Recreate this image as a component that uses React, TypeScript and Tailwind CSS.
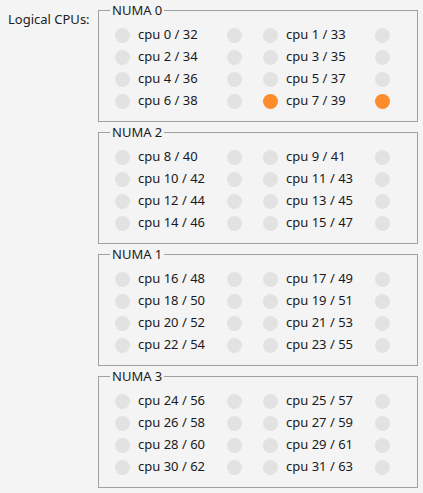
const numaNodes = [
  { name: 'NUMA 0', cpus: [0, 1, 2, 3, 4, 5, 6, 7] },
  { name: 'NUMA 2', cpus: [8, 9, 10, 11, 12, 13, 14, 15] },
  { name: 'NUMA 1', cpus: [16, 17, 18, 19, 20, 21, 22, 23] },
  { name: 'NUMA 3', cpus: [24, 25, 26, 27, 28, 29, 30, 31] },
];

// cpus currently busy (shown with orange dots)
const active = new Set([7]);

function Dot({ on }: { on: boolean }) {
  return (
    <span
      className={
        'block w-[15px] h-[15px] rounded-full shrink-0 ' +
        (on ? 'bg-[#fd8c2c]' : 'bg-[#e2e2e2]')
      }
    />
  );
}

function CpuItem({ cpu }: { cpu: number }) {
  const on = active.has(cpu);
  return (
    <div className="flex items-center h-[22px]">
      <Dot on={on} />
      <span className="ml-[8px] w-[89px] whitespace-nowrap">
        cpu {cpu} / {cpu + 32}
      </span>
      <Dot on={on} />
    </div>
  );
}

export default function App() {
  return (
    <div
      className="w-[423px] h-[493px] bg-[#f4f4f4] text-[13px] text-[#1a1a22] flex overflow-hidden"
      style={{ fontFamily: '"Noto Sans", "DejaVu Sans", sans-serif' }}
    >
      <div className="w-[98px] shrink-0 pl-[8px] pt-[9px] leading-5 text-[#222]">Logical CPUs:</div>
      <div className="flex flex-col">
        {numaNodes.map((node) => (
          <fieldset
            key={node.name}
            className="w-[320px] border border-[#a0a0a0] pl-[16px] pb-[9px]"
          >
            <legend className="-ml-[5px] px-[2px] leading-5">{node.name}</legend>
            <div className="grid grid-cols-[127px_127px] gap-x-[21px] pt-[4px]">
              {node.cpus.map((c) => (
                <CpuItem key={c} cpu={c} />
              ))}
            </div>
          </fieldset>
        ))}
      </div>
    </div>
  );
}
